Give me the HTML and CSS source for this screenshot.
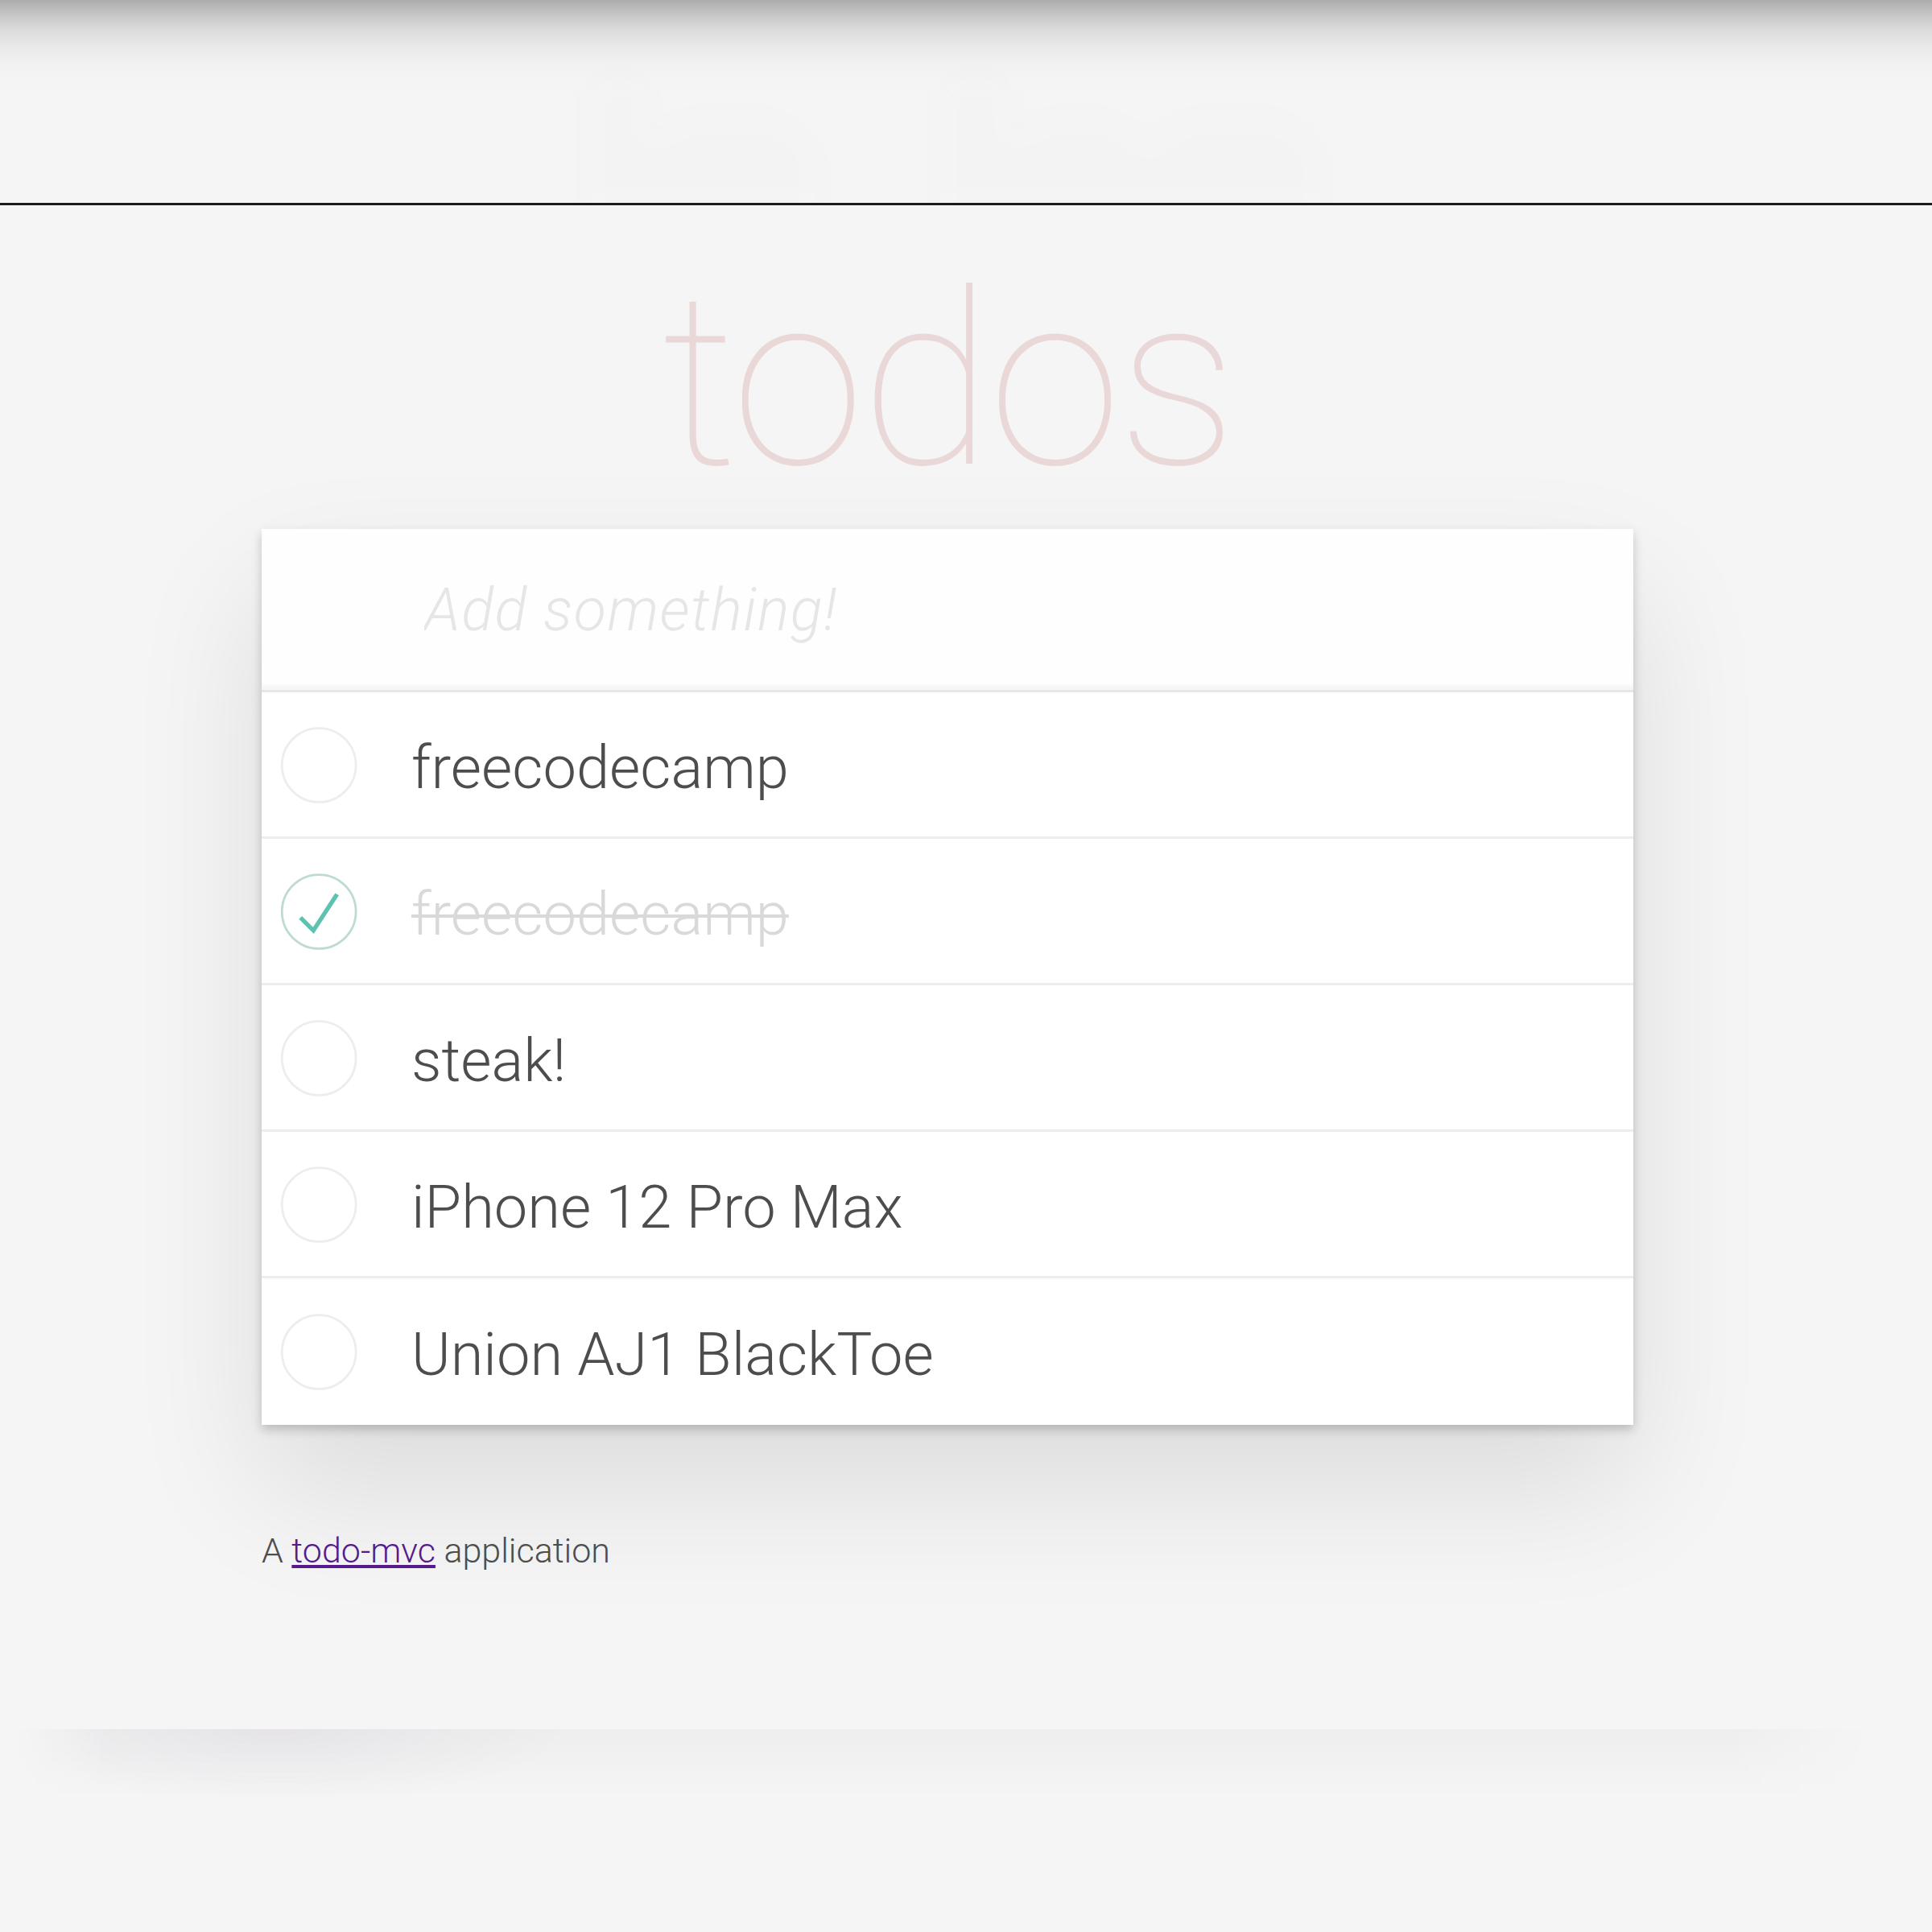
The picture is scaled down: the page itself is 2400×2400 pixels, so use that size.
FILE: index.html
```html
<!DOCTYPE html>
<html lang="en">
<head>
<meta charset="utf-8">
<title>todos</title>
<link rel="stylesheet" href="styles.css">
</head>
<body>
<div class="chrome">
  <svg class="ghost" width="960" height="160" viewBox="0 0 960 160" aria-hidden="true">
    <rect x="45" y="4" width="70" height="220" rx="35"/>
    <rect x="112" y="56" width="212" height="170" rx="70"/>
    <rect x="480" y="4" width="85" height="220" rx="42"/>
    <rect x="560" y="56" width="180" height="170" rx="70"/>
    <rect x="735" y="56" width="215" height="170" rx="70"/>
  </svg>
</div>
<div class="page">
  <section class="todoapp">
    <h1 class="title">todos</h1>
    <div class="card">
      <input class="new-todo" type="text" placeholder="Add something!">
      <ul class="list">
        <li class="item">
          <svg class="toggle" viewBox="-10 -18 100 135"><circle cx="50" cy="50" r="50" fill="none" stroke="#ededed" stroke-width="3"/></svg>
          <span class="label">freecodecamp</span>
        </li>
        <li class="item done">
          <svg class="toggle" viewBox="-10 -18 100 135"><circle cx="50" cy="50" r="50" fill="none" stroke="#bddad5" stroke-width="3"/><path fill="#5dc2af" d="M72 25L42 71 27 56l-4 4 20 20 34-52z"/></svg>
          <span class="label">freecodecamp</span>
        </li>
        <li class="item">
          <svg class="toggle" viewBox="-10 -18 100 135"><circle cx="50" cy="50" r="50" fill="none" stroke="#ededed" stroke-width="3"/></svg>
          <span class="label">steak!</span>
        </li>
        <li class="item">
          <svg class="toggle" viewBox="-10 -18 100 135"><circle cx="50" cy="50" r="50" fill="none" stroke="#ededed" stroke-width="3"/></svg>
          <span class="label">iPhone 12 Pro Max</span>
        </li>
        <li class="item">
          <svg class="toggle" viewBox="-10 -18 100 135"><circle cx="50" cy="50" r="50" fill="none" stroke="#ededed" stroke-width="3"/></svg>
          <span class="label">Union AJ1 BlackToe</span>
        </li>
      </ul>
    </div>
    <p class="info">A <a href="#">todo-mvc</a> application</p>
  </section>
</div>
<div class="band"></div>
</body>
</html>
```

FILE: styles.css
```css
* { box-sizing: border-box; }
html, body { margin: 0; padding: 0; }
body {
  background: #f5f5f5;
  font-family: Roboto, "Liberation Sans", sans-serif;
  font-weight: 300;
  color: #4d4d4d;
  min-height: 2400px;
  overflow: hidden;
}
.chrome {
  height: 255px;
  border-bottom: 3px solid #1c1c1c;
  background: linear-gradient(to bottom, #acacac 0, #c6c6c6 18px, #dcdcdc 38px, #e9e9e9 58px, #f1f1f1 78px, #f4f4f4 100px, #f5f5f5 130px);
  overflow: hidden;
  display: flex;
  justify-content: center;
  align-items: flex-end;
  padding-right: 62px;
}
.ghost {
  flex: none;
  fill: rgba(175, 47, 47, 0.012);
  filter: blur(20px);
}
.page { width: 2354px; }
.todoapp { width: 1704px; margin: 0 auto; }
.title {
  margin: 66px 0 0;
  text-align: center;
  font-size: 300px;
  font-weight: 100;
  line-height: 305px;
  height: 336px;
  letter-spacing: -5px;
  color: rgba(175, 47, 47, 0.15);
}
.card {
  background: #fff;
  box-shadow: 0 6px 12px rgba(0, 0, 0, 0.2), 0 78px 155px 0 rgba(0, 0, 0, 0.1);
}
.new-todo {
  display: block;
  width: 100%;
  height: 200px;
  margin: 0;
  border: 0;
  outline: none;
  padding: 0 40px 0 202px;
  background: #fefefe;
  font-family: Roboto, "Liberation Sans", sans-serif;
  font-size: 74px;
  font-weight: 300;
  letter-spacing: 1.4px;
  color: #4d4d4d;
  box-shadow: inset 0 -6px 3px rgba(0, 0, 0, 0.03);
}
.new-todo::placeholder {
  font-style: italic;
  font-weight: 300;
  color: #e6e6e6;
}
.list {
  margin: 0;
  padding: 0;
  list-style: none;
  border-top: 3px solid #e6e6e6;
}
.item {
  height: 182px;
  display: flex;
  align-items: center;
  border-bottom: 3px solid #ededed;
  font-size: 74px;
}
.item:last-child { border-bottom: 0; }
.toggle {
  width: 124px;
  height: 124px;
  flex: none;
}
.label {
  margin: 9px 0 0 62px;
  line-height: 1.2;
  white-space: nowrap;
}
.done .label {
  color: #d9d9d9;
  text-decoration: line-through;
  text-decoration-thickness: 4px;
}
.info {
  margin: 131px 0 0;
  font-size: 43px;
  color: #4d4d4d;
}
.info a {
  color: #551a8b;
  text-decoration: underline;
}
.band {
  margin: 197px 0 0 15px;
  width: 2312px;
  height: 86px;
  background:
    radial-gradient(ellipse 360px 90px at 330px 0, rgba(80, 50, 120, 0.055), rgba(80, 50, 120, 0) 100%),
    linear-gradient(to bottom, rgba(0, 0, 0, 0.028), rgba(0, 0, 0, 0.008) 70%, rgba(0, 0, 0, 0));
  -webkit-mask-image: linear-gradient(to right, transparent 0, #000 5%, #000 92%, transparent 100%);
  mask-image: linear-gradient(to right, transparent 0, #000 5%, #000 92%, transparent 100%);
}
```
